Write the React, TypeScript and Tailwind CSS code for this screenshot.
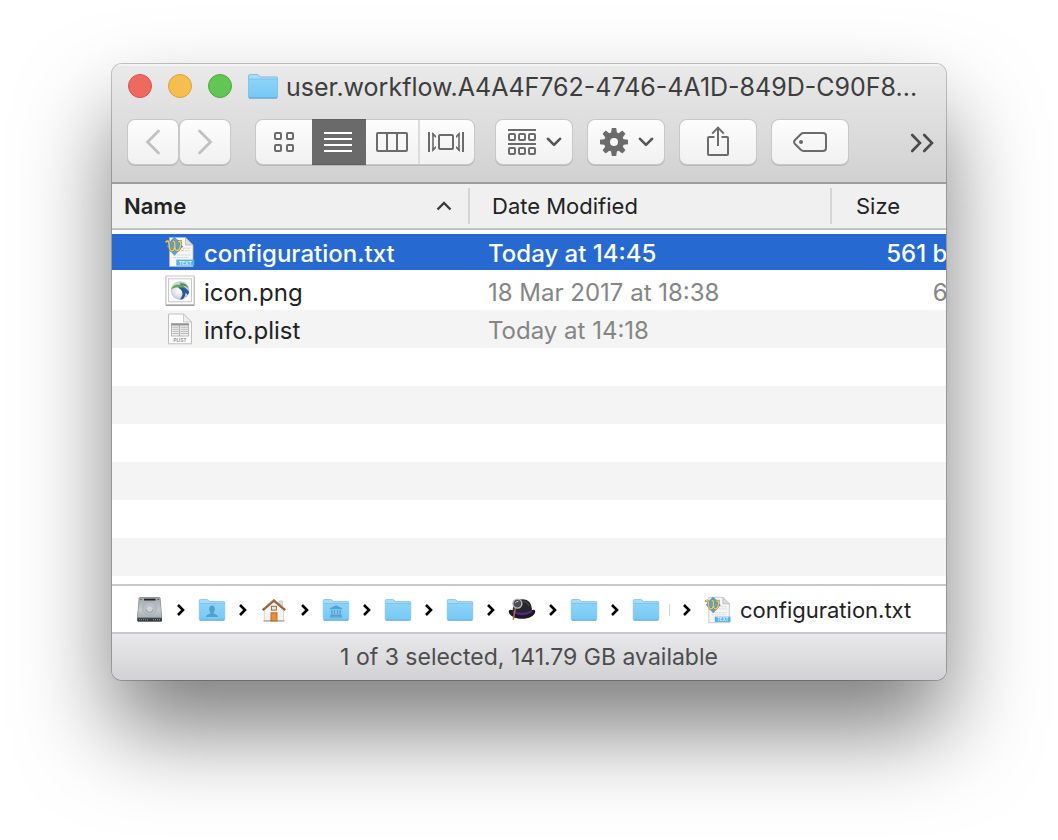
import type { ReactNode } from "react";

const INK = "#6b6b6b";

function Folder({ className, children }: { className: string; children?: ReactNode }) {
  return (
    <svg viewBox="0 0 30 25" className={className} aria-hidden="true">
      <defs>
        <linearGradient id="folderFront" x1="0" y1="0" x2="0" y2="1">
          <stop offset="0" stopColor="#8dd3f8" />
          <stop offset="1" stopColor="#77c8f5" />
        </linearGradient>
      </defs>
      <path d="M0.5 2Q0.5 0.5 2 0.5H9Q10 0.5 10.7 1.3L12 2.9H28.5Q29.5 2.9 29.5 4V23Q29.5 24 28.5 24H1.5Q0.5 24 0.5 23Z" fill="#a4dcf9" stroke="#74b9df" strokeWidth="0.8" />
      <path d="M0.8 5.2H29.2V22.8Q29.2 23.7 28.3 23.7H1.7Q0.8 23.7 0.8 22.8Z" fill="url(#folderFront)" />
      <path d="M0.8 5.1H29.2" stroke="#6fb9e2" strokeWidth="0.7" />
      <path d="M1 24H29" stroke="#559fca" strokeWidth="1" />
      {children}
    </svg>
  );
}

const pathFolder = "h-[22px] w-7 shrink-0";

function UsersFolder() {
  return (
    <Folder className={pathFolder}>
      <path d="M15 7.5C17.3 7.5 18.3 9.2 18.2 11.3C18.1 13.2 17.3 14.4 16.8 15V16.4C18.6 17.3 21.5 17.6 22 20.5H8C8.5 17.6 11.4 17.3 13.2 16.4V15C12.7 14.4 11.9 13.2 11.8 11.3C11.7 9.2 12.7 7.5 15 7.5Z" fill="#559fcc" />
    </Folder>
  );
}

function LibraryFolder() {
  return (
    <Folder className={pathFolder}>
      <path d="M15 7L22 10.6V11.6H8V10.6ZM9.4 12.5H11V17.5H9.4ZM12.5 12.5H14V17.5H12.5ZM16 12.5H17.5V17.5H16ZM19 12.5H20.6V17.5H19ZM8.7 18H21.3V19.2H8.7ZM8 19.7H22V21H8Z" fill="#559fcc" />
    </Folder>
  );
}

function Disk() {
  return (
    <svg viewBox="0 0 28 28" className="size-7" aria-hidden="true">
      <defs>
        <linearGradient id="diskTop" x1="0" y1="0" x2="0" y2="1">
          <stop offset="0" stopColor="#a0a8ab" />
          <stop offset="0.6" stopColor="#c3cacd" />
          <stop offset="1" stopColor="#a9b0b3" />
        </linearGradient>
      </defs>
      <path d="M1.2 22L3 2.2Q3.2 1.3 4.2 1.3H23Q24 1.3 24.2 2.2L26 22V24.5Q26 25.6 25 25.6H2.3Q1.2 25.6 1.2 24.5Z" fill="#5d6366" />
      <path d="M1.4 21.6L3.1 2.4Q3.2 1.6 4.2 1.6H23Q23.9 1.6 24.1 2.4L25.8 21.6Z" fill="url(#diskTop)" stroke="#8c9396" strokeWidth="0.5" />
      <path d="M8 3.6H19.5" stroke="#202325" strokeWidth="1.8" />
      <ellipse cx="13.6" cy="12.6" rx="6.8" ry="6.4" fill="#b9c0c3" stroke="#a1a9ac" strokeWidth="0.7" />
      <path d="M10.2 13.8A3.5 3.3 0 0 0 17 13.8" fill="none" stroke="#899194" strokeWidth="1" />
      <circle cx="13.6" cy="13" r="2.8" fill="#ced4d6" />
      <path d="M1.4 22.2H25.8V24.5Q25.8 25.4 25 25.4H2.3Q1.4 25.4 1.4 24.5Z" fill="#34393b" />
      <path d="M3 23.8H12M17 23.8H24" stroke="#a0a8aa" strokeWidth="1" strokeDasharray="1 1" />
      <circle cx="5" cy="3.4" r="0.7" fill="#444" />
      <circle cx="22.2" cy="3.4" r="0.7" fill="#444" />
    </svg>
  );
}

function House() {
  return (
    <svg viewBox="0 0 28 28" className="size-7" aria-hidden="true">
      <path d="M19 5H22.5V13H19Z" fill="#e2e2e2" stroke="#b5b5b5" strokeWidth="0.6" />
      <path d="M4.3 13L14 4.5L23.6 13V25.3H4.3Z" fill="#f4f3f1" stroke="#c8c5c0" strokeWidth="0.7" />
      <path d="M3.5 24.8H24.5" stroke="#b9b6ae" strokeWidth="1.6" />
      <path d="M2.7 14.1L13.9 4.5L25.2 14.1" fill="none" stroke="#8e6538" strokeWidth="2.4" />
      <path d="M4 11.9L13.9 3.3L24 11.9" fill="none" stroke="#c49b68" strokeWidth="0.8" />
      <rect x="11.4" y="10.3" width="5" height="3.8" fill="#e4e9ec" stroke="#9a6c3b" />
      <rect x="11" y="16.8" width="6" height="8.2" fill="#ed8b2e" stroke="#a5683a" strokeWidth="0.9" />
    </svg>
  );
}

function BowlerHat() {
  return (
    <svg viewBox="0 0 28 28" className="size-7" aria-hidden="true">
      <path d="M0.7 15.2Q1 13 4 14H24Q27.3 13 27.3 15.2C26.8 20 21 22.8 14 22.8C7 22.8 1.2 20 0.7 15.2Z" fill="#1b1b1e" />
      <path d="M4.7 15.2C4.7 7.5 8 3.2 14.3 3.2C20.8 3.2 24 7.5 24 15.2C21 18.8 8 18.8 4.7 15.2Z" fill="#26262a" />
      <path d="M4.6 14.4Q14 19.3 24 14.2V16.6Q14 21.8 4.6 16.8Z" fill="#57238a" />
      <path d="M14.5 5Q19 5.5 21 10" fill="none" stroke="#4b4b50" strokeWidth="1.2" />
      <path d="M7.2 12.7L5.4 23.2" stroke="#a96f49" strokeWidth="1.5" strokeLinecap="round" />
      <circle cx="9.4" cy="7.6" r="4.5" fill="#4d4d52" stroke="#b9b9bc" strokeWidth="1.4" />
      <path d="M7.2 7Q8.4 5 10.4 5.4" stroke="#eee" fill="none" strokeWidth="0.8" />
    </svg>
  );
}

function TextFile({ className }: { className: string }) {
  return (
    <svg viewBox="0 0 30 32" className={className} aria-hidden="true">
      <path d="M4.5 1.5H20.5L28 9V30.5H4.5Z" fill="#f6f6f6" stroke="#b4b7ba" strokeWidth="0.8" />
      <path d="M20.5 1.5V9H28Z" fill="#dcdcdc" stroke="#a9a9a9" strokeWidth="0.6" />
      <path d="M18 12.2H25M16 14.7H25M8 19H25M8 21.5H24" stroke="#d4d6d8" strokeWidth="1" strokeDasharray="3 0.8" />
      <path d="M9.3 1.4L12.6 4.2L16 6L14.9 8.4L17.8 10.6L14.4 13.2L12.6 16L9.5 19L6.2 15.8L4.2 12.8L1.6 10L4.6 7L6.2 4.4Z" fill="#4aa9e0" stroke="#2a77ad" strokeWidth="0.6" />
      <path d="M1.2 5.8Q4 3.6 4.2 8.5Q4.3 14.8 7 14.8Q9.5 14.6 9.8 8.5Q9.9 4.8 8.2 5.4M9.8 8.5Q9.6 14.8 12.4 14.6Q15.8 14 15.6 5.6L13.4 5.8" fill="none" stroke="#96773a" strokeWidth="2.4" strokeLinecap="round" />
      <path d="M1.2 5.8Q4 3.6 4.2 8.5Q4.3 14.8 7 14.8Q9.5 14.6 9.8 8.5Q9.9 4.8 8.2 5.4M9.8 8.5Q9.6 14.8 12.4 14.6Q15.8 14 15.6 5.6L13.4 5.8" fill="none" stroke="#ecc96a" strokeWidth="1.5" strokeLinecap="round" />
      <path d="M11.3 23.6H29.3V29.6H11.3Z" fill="#52b1ea" />
      <text x="20.3" y="28.6" textAnchor="middle" fontSize="5" fontWeight="700" fill="#e3f4fd" fontFamily="Inter, sans-serif">TEXT</text>
    </svg>
  );
}

function ImageFile() {
  return (
    <svg viewBox="0 0 30 32" className="h-8 w-[30px]" aria-hidden="true">
      <defs>
        <radialGradient id="ball" cx="0.45" cy="0.5" r="0.6">
          <stop offset="0" stopColor="#ffffff" />
          <stop offset="0.6" stopColor="#d8dde6" />
          <stop offset="1" stopColor="#a3adb9" />
        </radialGradient>
      </defs>
      <rect x="0.7" y="1.4" width="28.8" height="29.6" rx="0.6" fill="#9e9e9e" />
      <rect x="1" y="1" width="28" height="28.6" fill="#fff" stroke="#bababa" strokeWidth="0.8" />
      <rect x="3.5" y="3.8" width="23" height="23" fill="#fcfcfc" stroke="#c4c4c4" strokeWidth="0.9" />
      <circle cx="15" cy="15.5" r="9.3" fill="url(#ball)" />
      <path d="M5.8 14.6C7.6 10 12.6 8.2 17.2 10.2C20.4 11.6 22 14 22.6 16.6C20 13.4 16.6 12 13 12.2C10 12.3 7.6 13.2 5.8 14.6Z" fill="#69a647" />
      <path d="M14.5 8.4C18.5 7.6 22 9.4 23.6 13.2C21.5 11.2 18.8 10.4 16.2 10.6Z" fill="#4d8a6a" />
      <path d="M12.6 12.6C17 11.4 22 13 24.2 17.2C23.8 18.2 23.2 19 22.6 19.8L20.6 17.4C20.6 20.2 19.4 22.6 17.4 24.2L15 24.4C17.4 21.4 18.2 18.6 16.8 16C15.9 14.4 14.4 13.4 12.6 12.6Z" fill="#28569c" />
    </svg>
  );
}

function PlistFile() {
  return (
    <svg viewBox="0 0 30 32" className="h-8 w-[30px]" aria-hidden="true">
      <path d="M3.5 1H18.5L26.5 9V30.8H3.5Z" fill="#fcfcfc" stroke="#b9b9b9" strokeWidth="0.9" />
      <path d="M18.5 1V9H26.5Z" fill="#eee" stroke="#b9b9b9" strokeWidth="0.7" />
      <rect x="6.5" y="10.5" width="17.2" height="12.5" fill="#f3f3f3" stroke="#a6a6a6" strokeWidth="0.8" />
      <path d="M6.5 11.6H23.7" stroke="#929292" strokeWidth="1.7" />
      <path d="M7.5 14.2H13.5M7.5 16.3H13.5M7.5 18.4H13.5M7.5 20.5H13.5M15.5 14.2H23M15.5 16.3H23M15.5 18.4H23M15.5 20.5H23" stroke="#b4b4b4" strokeWidth="1" />
      <path d="M14.4 11V23" stroke="#999" strokeWidth="0.8" />
      <text x="15" y="28.9" textAnchor="middle" fontSize="4.6" fontWeight="600" fill="#858585" fontFamily="Inter, sans-serif">PLIST</text>
    </svg>
  );
}

function DropArrow() {
  return (
    <svg viewBox="0 0 16 10" className="h-[10px] w-4" fill="none" stroke="#555" strokeWidth="2.6" strokeLinecap="round" strokeLinejoin="round" aria-hidden="true">
      <path d="M2 1.8L8 7.9L14 1.8" />
    </svg>
  );
}

function Gear() {
  return (
    <svg viewBox="-14 -14 28 28" className="size-7" fill={INK} aria-hidden="true">
      {[0, 45, 90, 135, 180, 225, 270, 315].map((angle) => (
        <path key={angle} d="M-3.1 -8L-2.2 -14H2.2L3.1 -8Z" transform={`rotate(${angle})`} />
      ))}
      <circle r="7" fill="none" stroke={INK} strokeWidth="6" />
    </svg>
  );
}

function PathArrow() {
  return (
    <svg viewBox="0 0 8 12" className="h-3 w-2" fill="none" stroke="#000" strokeWidth="2.6" aria-hidden="true">
      <path d="M1 1L6 6L1 11" />
    </svg>
  );
}

const face = "flex h-11 items-center justify-center bg-linear-to-b from-[#fdfdfd] to-[#f1f1f1]";
const ring = "rounded-[7px] shadow-[0_0_0_1px_#c8c8c8,0_1px_0_1px_#b8b8b8]";

function ToolButton({ label, className, children }: { label: string; className: string; children: ReactNode }) {
  return (
    <button type="button" aria-label={label} className={`${face} ${ring} shrink-0 ${className}`}>
      {children}
    </button>
  );
}

const files = [
  { name: "configuration.txt", date: "Today at 14:45", size: "561 bytes", icon: <TextFile className="h-8 w-[30px]" /> },
  { name: "icon.png", date: "18 Mar 2017 at 18:38", size: "61 KB", icon: <ImageFile /> },
  { name: "info.plist", date: "Today at 14:18", size: "", icon: <PlistFile /> },
];

const path = [
  { name: "Macintosh HD", icon: <Disk /> },
  { name: "Users", icon: <UsersFolder /> },
  { name: "Home", icon: <House /> },
  { name: "Library", icon: <LibraryFolder /> },
  { name: "Application Support", icon: <Folder className={pathFolder} /> },
  { name: "Alfred", icon: <Folder className={pathFolder} /> },
  { name: "Alfred Preferences", icon: <BowlerHat /> },
  { name: "Workflows", icon: <Folder className={pathFolder} /> },
];

export default function App() {
  return (
    <div className="min-h-screen overflow-hidden bg-white px-28 pt-16 pb-40 font-['Inter',sans-serif] text-[#222]">
      <main className="overflow-hidden rounded-[10px] bg-white shadow-[0_0_0_1px_rgba(0,0,0,0.22),0_50px_90px_rgba(0,0,0,0.51)]">
        <header className="border-b-2 border-[#9d9d9d] bg-linear-to-b from-[#eaeaea] to-[#d1d1d1] shadow-[inset_0_2px_0_#f3f3f3]">
          <div className="flex h-11 items-center gap-4 pl-4">
            <button type="button" aria-label="Close" className="size-6 shrink-0 rounded-full border border-[#d9524a] bg-[#ee6a5f]" />
            <button type="button" aria-label="Minimize" className="size-6 shrink-0 rounded-full border border-[#dda03c] bg-[#f6be4f]" />
            <button type="button" aria-label="Zoom" className="size-6 shrink-0 rounded-full border border-[#50a73e] bg-[#61c654]" />
            <h1 className="flex min-w-0 items-center gap-[7px] text-[25px] leading-8 text-[#3d3d3d]">
              <Folder className="-ml-px h-[25px] w-8 shrink-0" />
              <span className="pt-[2px] whitespace-nowrap">user.workflow.A4A4F762-4746-4A1D-849D-C90F8...</span>
            </h1>
          </div>
          <div className="flex items-center gap-4 pt-3 pr-3 pb-[18px] pl-4">
            <div className="mr-[10px] flex gap-[2px]">
              <ToolButton label="Back" className="w-[50px]">
                <svg viewBox="0 0 16 26" className="h-[26px] w-4" fill="none" stroke="#c1c1c1" strokeWidth="2.8" strokeLinecap="round" aria-hidden="true">
                  <path d="M13.5 2L2.5 13L13.5 24" />
                </svg>
              </ToolButton>
              <ToolButton label="Forward" className="w-[50px]">
                <svg viewBox="0 0 16 26" className="h-[26px] w-4" fill="none" stroke="#c1c1c1" strokeWidth="2.8" strokeLinecap="round" aria-hidden="true">
                  <path d="M2.5 2L13.5 13L2.5 24" />
                </svg>
              </ToolButton>
            </div>
            <div className={`mr-[6px] flex shrink-0 ${ring}`}>
              <button type="button" aria-label="Icon view" className={`${face} w-14 rounded-l-[7px]`}>
                <svg viewBox="0 0 20 20" className="size-5" fill="none" stroke={INK} strokeWidth="2" aria-hidden="true">
                  <path d="M2 1H6Q7 1 7 2V6Q7 7 6 7H2Q1 7 1 6V2Q1 1 2 1ZM14 1H18Q19 1 19 2V6Q19 7 18 7H14Q13 7 13 6V2Q13 1 14 1ZM2 13H6Q7 13 7 14V18Q7 19 6 19H2Q1 19 1 18V14Q1 13 2 13ZM14 13H18Q19 13 19 14V18Q19 19 18 19H14Q13 19 13 18V14Q13 13 14 13Z" />
                </svg>
              </button>
              <button type="button" aria-label="List view" aria-pressed="true" className="flex h-11 w-[54px] items-center justify-center bg-[#6a6a6a] pr-[2px] shadow-[0_-1px_0_#5f5f5f,0_1px_0_#5f5f5f]">
                <svg viewBox="0 0 28 20" className="h-5 w-7" stroke="#fff" strokeWidth="2" aria-hidden="true">
                  <path d="M0 1H28M0 7H28M0 13H28M0 19H28" />
                </svg>
              </button>
              <button type="button" aria-label="Column view" className={`${face} w-[54px] border-r-2 border-[#dcdcdc]`}>
                <svg viewBox="0 0 32 20" className="h-5 w-8" fill="none" stroke={INK} strokeWidth="2" aria-hidden="true">
                  <rect x="1" y="1" width="30" height="18" rx="1" />
                  <path d="M11 1V19M21 1V19" />
                </svg>
              </button>
              <button type="button" aria-label="Cover Flow view" className={`${face} w-[54px] rounded-r-[7px] pr-[2px]`}>
                <svg viewBox="0 0 36 20" className="h-5 w-9" fill="none" stroke={INK} strokeWidth="2" aria-hidden="true">
                  <rect x="11" y="3" width="14" height="14" rx="1" />
                  <path d="M1 0V20M35 0V20" />
                  <path d="M5 1.5V18.5M31 1.5V18.5" strokeWidth="1.6" />
                  <path d="M4.2 0L8 3.8V6L4.2 3ZM4.2 20L8 16.2V14L4.2 17ZM31.8 0L28 3.8V6L31.8 3ZM31.8 20L28 16.2V14L31.8 17Z" fill={INK} stroke="none" />
                </svg>
              </button>
            </div>
            <ToolButton label="Arrange items" className="w-[76px] gap-[10px] pl-[2px]">
              <svg viewBox="0 0 28 26" className="h-[26px] w-7" fill="none" stroke={INK} strokeWidth="2" aria-hidden="true">
                <path d="M0 1H28M0 15H28" />
                {[5, 19].map((y) =>
                  [1, 11, 21].map((x) => <rect key={`${x}-${y}`} x={x} y={y} width="6" height="6" rx="1" />),
                )}
              </svg>
              <DropArrow />
            </ToolButton>
            <ToolButton label="Actions" className="w-[76px] gap-[10px] pl-[2px]">
              <Gear />
              <DropArrow />
            </ToolButton>
            <ToolButton label="Share" className="w-[76px]">
              <svg viewBox="0 0 22 30" className="mb-[2px] h-[30px] w-[22px]" fill="none" stroke={INK} strokeWidth="2" aria-hidden="true">
                <path d="M7.5 11H2Q1 11 1 12V28Q1 29 2 29H20Q21 29 21 28V12Q21 11 20 11H14.5M11 20V1.5M5.2 7.6L11 1.6L16.8 7.6" />
              </svg>
            </ToolButton>
            <ToolButton label="Edit tags" className="w-[76px]">
              <svg viewBox="0 0 34 20" className="h-5 w-[34px]" fill="none" stroke={INK} strokeWidth="2" aria-hidden="true">
                <path d="M10.5 1H30Q33 1 33 4V16Q33 19 30 19H10.5Q9 19 7.8 17.8L2 12Q0.2 10 2 8L7.8 2.2Q9 1 10.5 1Z" />
                <circle cx="8" cy="10" r="2" fill={INK} stroke="none" />
              </svg>
            </ToolButton>
            <button type="button" aria-label="More toolbar items" className="ml-auto pt-[2px]">
              <svg viewBox="0 0 24 20" className="h-5 w-6" fill="none" stroke="#4b4b4b" strokeWidth="2.6" strokeLinecap="round" aria-hidden="true">
                <path d="M2.2 2L10 10L2.2 18M14.2 2L22 10L14.2 18" />
              </svg>
            </button>
          </div>
        </header>

        <div className="overflow-hidden">
          <table className="w-full min-w-[894px] table-fixed border-separate border-spacing-0 text-left whitespace-nowrap">
            <colgroup>
              <col className="w-[358px]" />
              <col className="w-[362px]" />
              <col />
            </colgroup>
            <thead className="text-[22px] leading-9">
              <tr className="bg-[#f0f0f0]">
                <th scope="col" aria-sort="ascending" className="h-[46px] border-b-2 border-[#c1c1c1] p-0 font-semibold">
                  <div className="flex items-center justify-between border-r-2 border-[#d5d5d5] pr-4 pl-3">
                    Name
                    <svg viewBox="0 0 16 10" className="h-[10px] w-4" fill="none" stroke="#3c3c3c" strokeWidth="2.4" aria-hidden="true">
                      <path d="M1.5 8.5L8 2L14.5 8.5" />
                    </svg>
                  </div>
                </th>
                <th scope="col" className="border-b-2 border-[#c1c1c1] p-0 font-normal">
                  <div className="border-r-2 border-[#d5d5d5] pl-[22px]">Date Modified</div>
                </th>
                <th scope="col" className="border-b-2 border-[#c1c1c1] p-0 pl-6 font-normal">Size</th>
              </tr>
            </thead>
            <tbody className="text-[24px] leading-9">
              <tr aria-hidden="true">
                <td colSpan={3} className="h-1 p-0" />
              </tr>
              {files.map((file, i) => {
                const cell =
                  i === 0
                    ? "h-[38px] border-b-2 border-white bg-[#266ad1] bg-clip-padding p-0 font-medium text-white"
                    : i === 1
                      ? "h-[38px] p-0 text-[#858585]"
                      : "h-[38px] bg-[#f4f4f4] p-0 text-[#858585]";
                return (
                  <tr key={file.name} aria-selected={i === 0}>
                    <td className={cell}>
                      <div className={`flex h-9 items-center gap-[9px] pl-[53px] ${i === 0 ? "" : "text-[#222]"}`}>
                        {file.icon}
                        <span className="h-8">{file.name}</span>
                      </div>
                    </td>
                    <td className={cell}>
                      <div className="h-8 pl-[18px]">{file.date}</div>
                    </td>
                    <td className={cell}>
                      <div className="h-8 pr-[10px] text-right">{file.size}</div>
                    </td>
                  </tr>
                );
              })}
              {[0, 1, 2, 3, 4, 5].map((row) => (
                <tr key={row} aria-hidden="true">
                  <td colSpan={3} className={row % 2 ? "h-[38px] bg-[#f4f4f4] p-0" : "h-[38px] p-0"} />
                </tr>
              ))}
            </tbody>
          </table>
        </div>

        <nav aria-label="Path" className="mt-2 border-y-2 border-[#c9c9c9]">
          <ol className="flex h-[46px] items-center pt-[2px] pl-6 text-[22px] text-[#222]">
            {path.map((item) => (
              <li key={item.name} aria-label={item.name} className="flex w-[62px] shrink-0 items-center gap-[13px]">
                {item.icon}
                <PathArrow />
              </li>
            ))}
            <li aria-label="Workflow folder" className="flex w-[72px] shrink-0 items-center">
              <Folder className={pathFolder} />
              <span className="ml-[9px] h-3 w-px bg-[#e9d5c5]" />
              <span className="ml-[13px]">
                <PathArrow />
              </span>
            </li>
            <li className="flex items-center gap-2 whitespace-nowrap">
              <TextFile className="h-7 w-7 shrink-0" />
              configuration.txt
            </li>
          </ol>
        </nav>
        <footer className="flex h-[46px] items-center justify-center bg-linear-to-b from-[#e9e9eb] to-[#d2d2d4] text-[23px] text-[#4d4d4d]">
          1 of 3 selected, 141.79 GB available
        </footer>
      </main>
    </div>
  );
}
